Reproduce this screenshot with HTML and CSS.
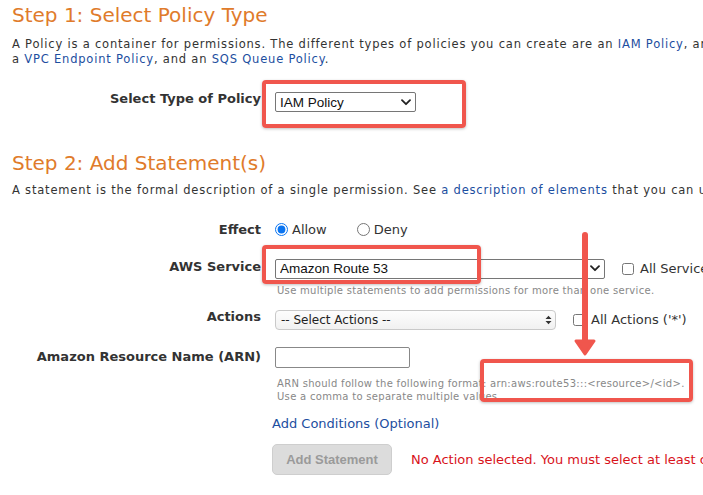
FILE: index.html
```html
<!DOCTYPE html>
<html>
<head>
<meta charset="utf-8">
<link rel="stylesheet" href="styles.css">
</head>
<body>
<div class="page">
  <h1 class="step">Step 1: Select Policy Type</h1>
  <p class="intro">A Policy is a container for permissions. The different types of policies you can create are an <a href="#">IAM Policy</a>, an <a href="#">S3 Bucket Policy</a>, an <a href="#">SNS Topic Policy</a>,<br>a <a href="#">VPC Endpoint Policy</a>, and an <a href="#">SQS Queue Policy</a>.</p>

  <div class="row row-policy">
    <label class="lbl">Select Type of Policy</label>
    <div class="sel sel-policy">
      <select><option>IAM Policy</option></select>
      <svg class="chev" width="10" height="7" viewBox="0 0 10 7"><path d="M1 1.2 L5 5.2 L9 1.2" fill="none" stroke="#222" stroke-width="1.8" stroke-linecap="round" stroke-linejoin="round"/></svg>
    </div>
  </div>

  <h2 class="step step2">Step 2: Add Statement(s)</h2>
  <p class="intro intro2">A statement is the formal description of a single permission. See <a href="#">a description of elements</a> that you can use in statements.</p>

  <div class="row row-effect">
    <label class="lbl">Effect</label>
    <div class="radios">
      <label class="opt"><input type="radio" name="eff" checked> Allow</label>
      <label class="opt deny"><input type="radio" name="eff"> Deny</label>
    </div>
  </div>

  <div class="row row-service">
    <label class="lbl">AWS Service</label>
    <div class="sel sel-service">
      <select><option>Amazon Route 53</option></select>
      <svg class="chev" width="10" height="7" viewBox="0 0 10 7"><path d="M1 1.2 L5 5.2 L9 1.2" fill="none" stroke="#222" stroke-width="1.8" stroke-linecap="round" stroke-linejoin="round"/></svg>
    </div>
    <label class="chk"><input type="checkbox"> All Services</label>
  </div>
  <div class="help help-service">Use multiple statements to add permissions for more than one service.</div>

  <div class="row row-actions">
    <label class="lbl">Actions</label>
    <div class="sel sel-actions">
      <select><option>-- Select Actions --</option></select>
      <svg class="updown" width="7" height="10" viewBox="0 0 7 10"><path d="M0.5 4 L3.5 0.8 L6.5 4 Z M0.5 6 L3.5 9.2 L6.5 6 Z" fill="#333"/></svg>
    </div>
    <label class="chk chk-actions"><input type="checkbox"> All Actions ('*')</label>
  </div>

  <div class="row row-arn">
    <label class="lbl">Amazon Resource Name (ARN)</label>
    <input class="arn" type="text">
  </div>
  <div class="help help-arn">ARN should follow the following format: arn:aws:route53:::&lt;resource&gt;/&lt;id&gt;.<br>Use a comma to separate multiple values.</div>

  <a class="cond" href="#">Add Conditions (Optional)</a>

  <div class="submit">
    <button class="btn" disabled>Add Statement</button>
    <span class="err">No Action selected. You must select at least one Action.</span>
  </div>

  <div class="mark mark-policy"></div>
  <div class="mark mark-service"></div>
  <div class="mark mark-arn"></div>
  <svg class="arrow" width="30" height="135" viewBox="0 0 30 135">
    <line x1="15" y1="3" x2="15" y2="110" stroke="#f0564d" stroke-width="6" stroke-linecap="round"/>
    <path d="M6 109 L24 109 L15 122 Z" fill="#f0564d" stroke="#f0564d" stroke-width="3" stroke-linejoin="round"/>
  </svg>
</div>
</body>
</html>
```

FILE: styles.css
```css
html, body {
  margin: 0;
  padding: 0;
  background: #fff;
}
body {
  font-family: "DejaVu Sans", Verdana, sans-serif;
  color: #333;
  overflow: hidden;
}
.page {
  position: relative;
  width: 703px;
  height: 495px;
  padding-left: 12px;
  box-sizing: border-box;
  overflow: hidden;
}
a {
  color: #1c4ea0;
  text-decoration: none;
}
.step {
  margin: 0;
  font-weight: normal;
  font-size: 20px;
  line-height: 24px;
  color: #e07b2b;
  padding-top: 3px;
  white-space: nowrap;
}
.step2 {
  padding-top: 0;
  margin-top: 39px;
}
.intro {
  margin: 10px 0 0;
  font-size: 11.5px;
  line-height: 14.5px;
  letter-spacing: 0.8px;
  white-space: nowrap;
}
.intro2 {
  margin-top: 8px;
}
.row {
  display: flex;
  align-items: center;
  gap: 14px;
}
.lbl {
  width: 249px;
  text-align: right;
  font-weight: bold;
  font-size: 13px;
  line-height: 16px;
  color: #333;
  flex: none;
}
.row-policy {
  margin-top: 26px;
  height: 20px;
}
.row-policy .lbl {
  position: relative;
  top: -3px;
}
.sel {
  display: inline-grid;
  align-items: center;
  flex: none;
}
.sel select, .sel svg {
  grid-area: 1 / 1;
}
.sel select {
  appearance: none;
  -webkit-appearance: none;
  margin: 0;
  background: #fff;
  border: 1px solid #767676;
  border-radius: 2px;
  font-family: "Liberation Sans", Arial, sans-serif;
  font-size: 13.5px;
  color: #111;
  height: 20px;
  padding: 0 0 0 4px;
  box-sizing: border-box;
  outline: none;
}
.sel svg {
  justify-self: end;
  margin-right: 5px;
  pointer-events: none;
}
.sel-policy select {
  width: 141px;
}
.row-effect {
  margin-top: 24px;
  height: 16px;
}
.radios {
  display: flex;
  align-items: center;
  font-size: 13px;
  color: #333;
}
.opt {
  display: flex;
  align-items: center;
  gap: 4px;
}
.opt input {
  margin: 0;
  width: 13px;
  height: 13px;
  accent-color: #0a74f0;
}
.deny {
  margin-left: 30px;
}
.row-service {
  margin-top: 21px;
  height: 20px;
}
.row-service .lbl {
  position: relative;
  top: -2px;
}
.sel-service select {
  width: 330px;
}
.chk {
  display: flex;
  align-items: center;
  gap: 6px;
  font-size: 13px;
  color: #333;
  margin-left: 3px;
  white-space: nowrap;
}
.chk input {
  margin: 0;
  width: 12px;
  height: 12px;
}
.help {
  margin-left: 265px;
  font-size: 10px;
  line-height: 13px;
  letter-spacing: 0.3px;
  color: #888;
  white-space: nowrap;
}
.help-service {
  margin-top: 5px;
}
.row-actions {
  margin-top: 13px;
  height: 20px;
}
.row-actions .lbl {
  position: relative;
  top: -3px;
}
.sel-actions select {
  width: 281px;
  border: 1px solid #c9c9c9;
  border-radius: 4px;
  background: linear-gradient(#fdfdfd, #f1f1f1);
  font-family: "DejaVu Sans", Verdana, sans-serif;
  font-size: 12px;
  color: #222;
  padding-left: 5px;
}
.sel-actions svg {
  margin-right: 4px;
}
.chk-actions {
  margin-left: 3px;
}
.row-arn {
  margin-top: 17px;
  height: 21px;
}
.arn {
  margin: 0;
  width: 135px;
  height: 21px;
  box-sizing: border-box;
  border: 1px solid #888;
  border-radius: 2px;
}
.help-arn {
  margin-top: 9px;
}
.cond {
  display: block;
  width: fit-content;
  margin: 13px 0 0 260px;
  font-size: 13px;
  line-height: 16px;
}
.submit {
  display: flex;
  align-items: center;
  margin: 12px 0 0 260px;
  gap: 19px;
}
.btn {
  flex: none;
  width: 120px;
  height: 31px;
  background: #dcdcdc;
  border: 1px solid #cecece;
  border-radius: 5px;
  color: #9a9a9a;
  font-family: "Liberation Sans", Arial, sans-serif;
  font-weight: bold;
  font-size: 13px;
  padding: 0;
  white-space: nowrap;
}
.err {
  color: #d8131b;
  font-size: 13px;
  white-space: nowrap;
}
.mark {
  position: absolute;
  border: 4px solid #f0564d;
  border-radius: 4px;
  box-shadow: 0 1px 3px rgba(0,0,0,0.25);
}
.mark-policy {
  left: 262px;
  top: 80px;
  width: 196px;
  height: 40px;
}
.mark-service {
  left: 262px;
  top: 245px;
  width: 211px;
  height: 31px;
}
.mark-arn {
  left: 480px;
  top: 359px;
  width: 205px;
  height: 35px;
}
.arrow {
  position: absolute;
  left: 570px;
  top: 232px;
}
```
